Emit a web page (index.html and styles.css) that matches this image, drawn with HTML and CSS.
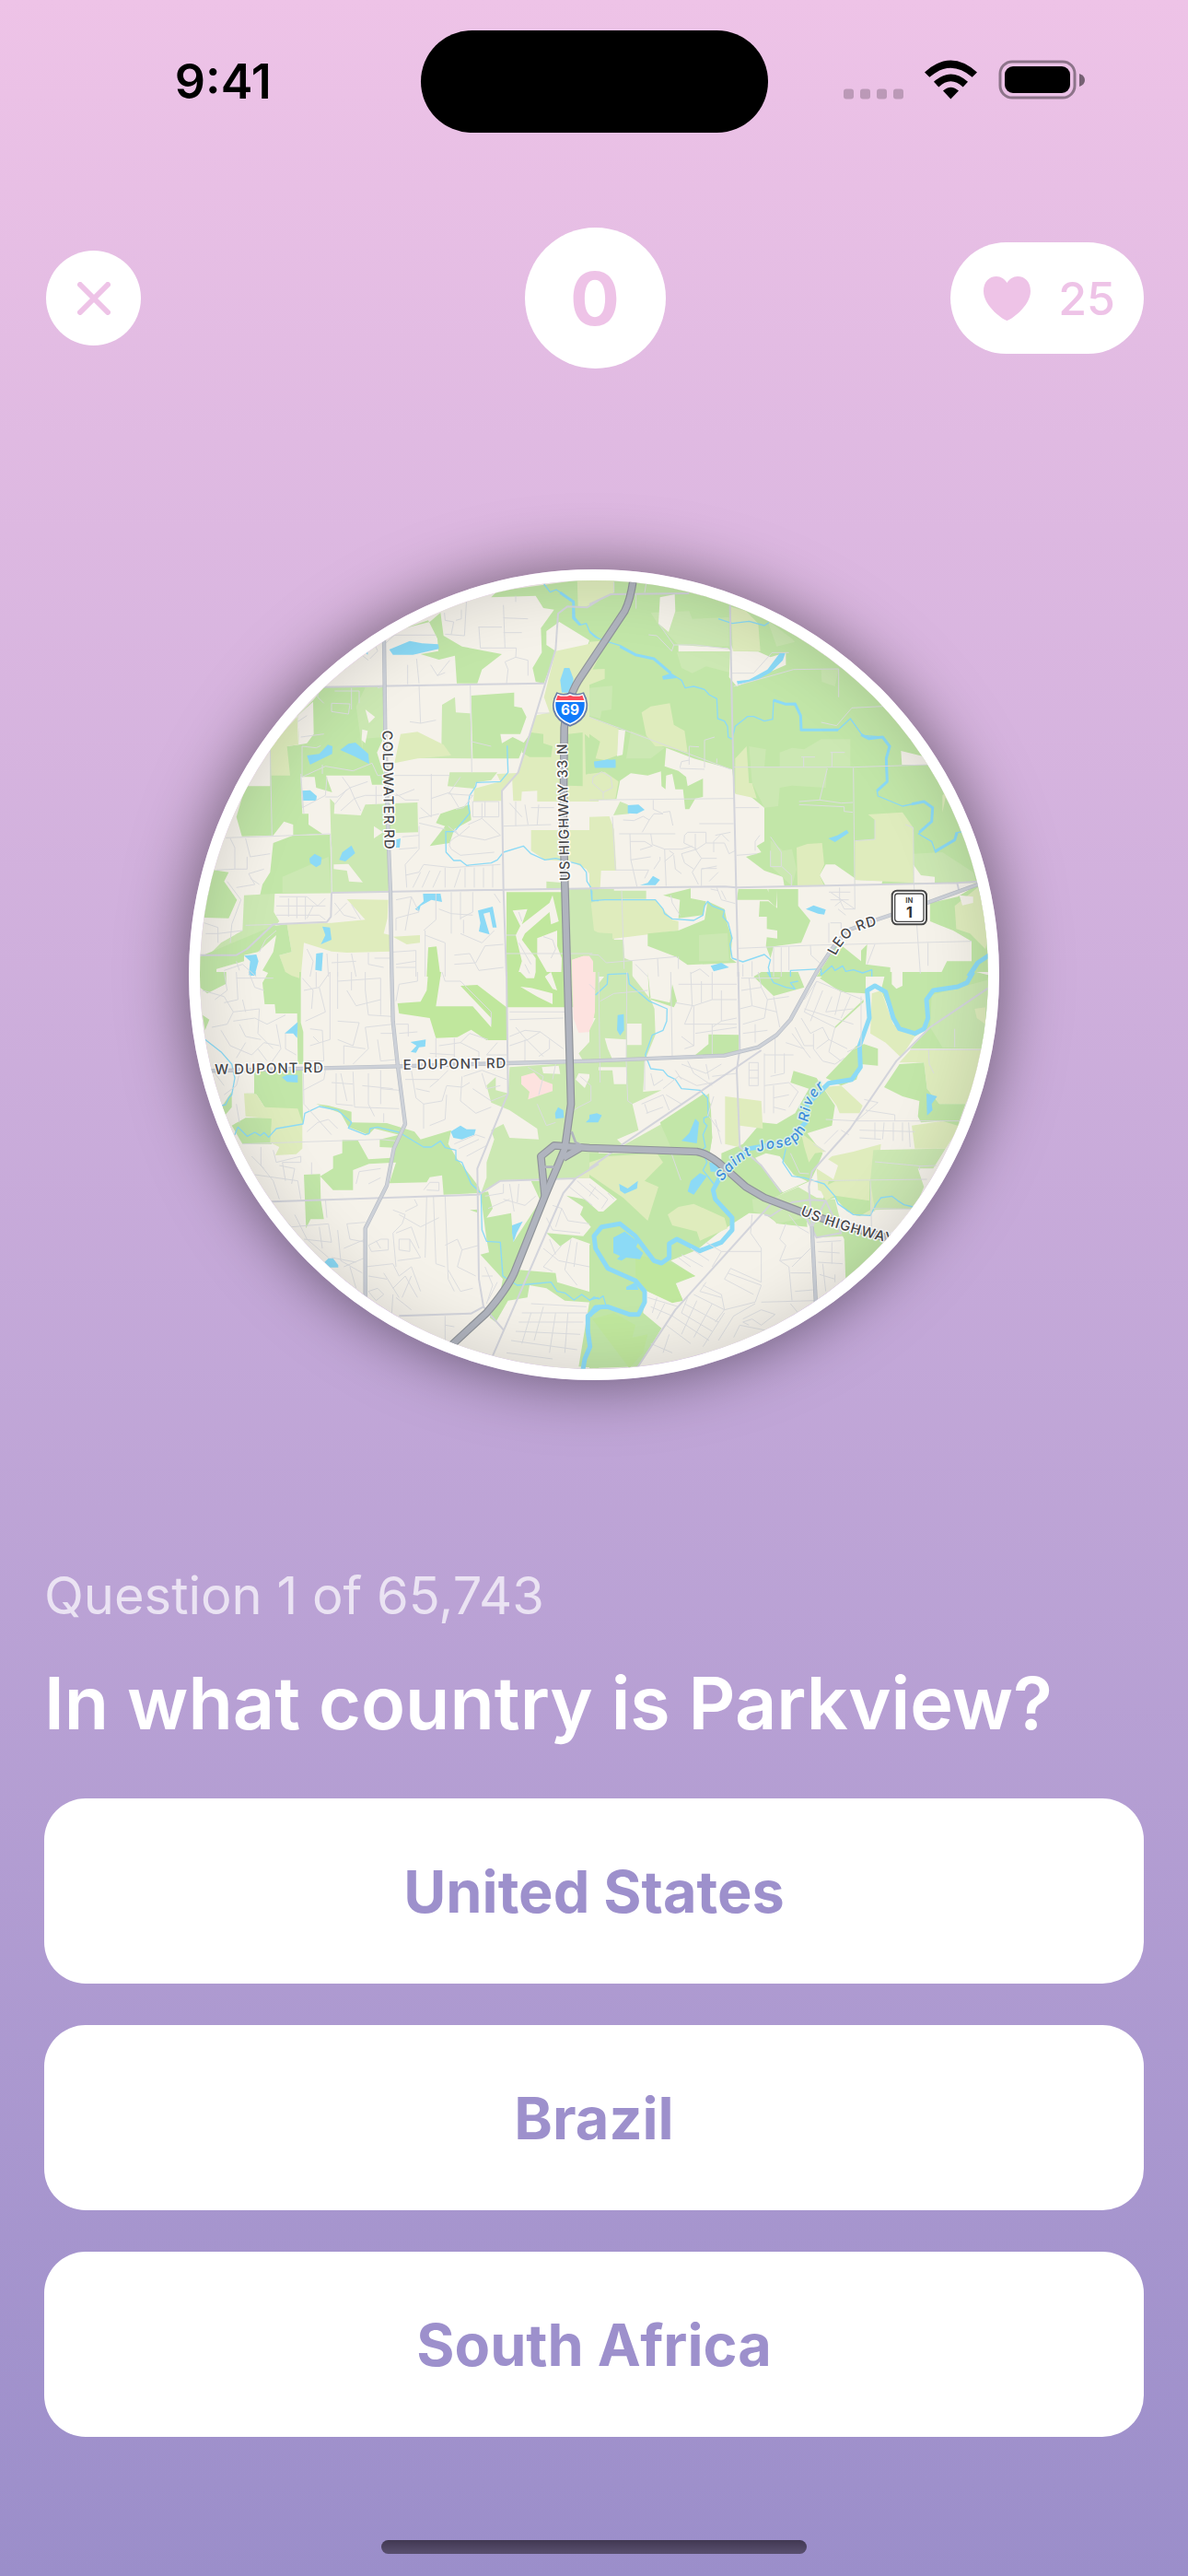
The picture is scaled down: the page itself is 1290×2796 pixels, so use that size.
FILE: index.html
```html
<!DOCTYPE html>
<html lang="en">
<head>
<meta charset="utf-8">
<meta name="viewport" content="width=device-width, initial-scale=1">
<title>Geography Quiz</title>
<link rel="stylesheet" href="styles.css">
</head>
<body>
<div class="screen">
  <header class="status">
    <time class="clock">9:41</time>
    <div class="island"></div>
    <div class="indicators">
      <svg class="dots" viewBox="0 0 65 42" aria-hidden="true">
        <rect x="0" y="31" width="11" height="11" rx="3"/><rect x="18" y="31" width="11" height="11" rx="3"/>
        <rect x="36" y="31" width="11" height="11" rx="3"/><rect x="54" y="31" width="11" height="11" rx="3"/>
      </svg>
      <svg class="wifi" viewBox="0 0 171 126" aria-hidden="true">
        <path d="M0 39Q85-39 171 39L155 55Q85-5 16 55Z"/>
        <path d="M30 70Q85 20 141 70L125 87Q85 50 46 87Z"/>
        <path d="M60 99Q85 76 111 99L85 126Z"/>
      </svg>
      <svg class="battery" viewBox="0 0 94 43" aria-hidden="true">
        <rect class="shell" x="2" y="2" width="81" height="39" rx="13"/>
        <rect x="7" y="7" width="71" height="29" rx="9"/>
        <path class="cap" d="M88 15Q94 17 94 22Q94 27 88 29Z"/>
      </svg>
    </div>
  </header>

  <nav class="topbar">
    <button class="close" type="button" aria-label="Close">
      <svg viewBox="0 0 36 36" aria-hidden="true"><path d="M3 3L33 33M33 3L3 33"/></svg>
    </button>
    <output class="score">0</output>
    <div class="lives">
      <svg viewBox="0 0 51 48" aria-hidden="true"><path d="M25.500 48C23 48 0 33 0 16C0 6 6 0 14 0C19 0 23 3 25.500 7C28 3 32 0 37 0C45 0 51 6 51 16C51 33 28 48 25.500 48Z"/></svg>
      <span>25</span>
    </div>
  </nav>

  <main class="stage">
    <div class="map">
      <svg viewBox="51 60 2568 2568" role="img" aria-label="Map of Parkview and surroundings">
        <defs>
          <path id="leo" d="M2122 1283C2150 1225 2180 1200 2262 1182"/>
          <path id="river" d="M1753 2018C1800 1950 1860 1912 1930 1908C2010 1900 2030 1850 2038 1790C2045 1745 2075 1710 2150 1670"/>
          <path id="us" d="M2006 2125Q2120 2175 2320 2222"/>
          <path id="us33" d="M1256 1038L1246 570"/>
        </defs>
        <rect class="land" width="2700" height="2700"/>

        <!-- vegetation, north-west -->
        <g>
          <path class="g" d="M1000 115L1020 95L1350 50V260L1310 285L1320 255L1222 195L1180 225V270L1210 290L1172 395L1145 390L1135 345L1165 295L1162 215L1205 155L1170 150L1145 110Z"/>
          <path class="y" d="M1280 50H1350V130L1310 145H1283Z"/>
          <path class="y" d="M1210 290L1350 260V780H1150V745L1100 748L1098 778H1072L1068 700L1090 685L1142 500L1190 490L1172 440Z"/>
          <path class="y" d="M1018 690L1085 687L1035 745V778L942 780L945 738L1030 715Z"/>
          <path class="g" d="M720 215L800 195L835 165L845 240L905 275L1035 300L970 350L955 395H888L882 305L830 318L770 300L828 290L825 250L795 190Z"/>
          <path class="g" d="M455 408L650 405L655 560L628 620L640 660L665 725H612L605 695H462L482 750L430 735L425 700H380L385 820H405V855L450 885L355 890V855L325 845L290 890L188 893L170 830L200 730H280V600L335 600L375 595L370 500L420 450Z"/>
          <path class="l" d="M590 408H650L652 570L585 575L580 610L560 470Z"/>
          <path class="y" d="M280 600L368 505L372 595L335 600L345 695H283Z"/>
          <path class="land" d="M370 500L420 455L422 560L400 590L375 595ZM590 480L622 505L602 525ZM580 545L598 550L590 590L578 580Z"/>
          <path class="l" d="M475 770L490 785L488 820L575 825L590 790L760 783L762 880L670 883L665 1075L482 1078L478 890Z"/>
          <path class="g" d="M290 915L355 890L475 888L480 1078L295 1080L270 1120L240 1115L255 1050L280 1010Z"/>
          <path class="l" d="M320 1025L470 960L480 1078H320Z"/>
          <path class="land" d="M487 985L535 983L582 1043L537 1040L530 1005L487 1000ZM618 860L648 880L618 900Z"/>
          <path class="l" d="M195 1085L295 1080L292 1140L310 1170L290 1190L200 1270L170 1280H80L120 1240L190 1200Z"/>
          <path class="y" d="M335 1180L480 1175L590 1165L530 1098L665 1100L662 1160L650 1210L672 1215V1268L530 1272L480 1268L390 1240L380 1350L330 1340L310 1280L350 1270Z"/>
          <path class="g" d="M95 1003L145 1010L130 1040L172 1100L145 1160L65 1158L60 1070Z"/>
          <path class="g" d="M50 1285L290 1185L335 1180L350 1270L310 1280L335 1350H300L255 1330L290 1270L300 1215L240 1270L195 1280V1300L105 1325V1350H50Z"/>
          <path class="g" d="M935 435L1075 425V470L1100 475L1115 505L1095 560L1030 560L1035 590L1070 570L1110 590L1090 640L940 640Z"/>
          <path class="l" d="M840 465L882 440L885 490L932 493L937 640L755 638L760 622L838 600Z"/>
          <path class="y" d="M685 655L705 560L760 553L845 595L870 630L760 640Z"/>
          <path class="l" d="M865 685L1020 685L1000 710L950 718L945 738L858 730Z"/>
          <path class="g" d="M930 790L935 840L880 870L865 915L800 925L850 860L820 850L835 820L880 805Z"/>
          <path class="g" d="M1105 590L1130 555L1170 560V590L1200 600L1195 635H1125L1100 620ZM1250 560L1298 555V730L1250 728ZM1305 560L1350 600V680L1308 692Z"/>
          <path class="y" d="M1130 873H1350V1060L1310 1000L1260 975L1175 970L1130 940Z"/>
          <path class="park" d="M1050 1075H1240V1350H1050Z"/>
          <path class="l" d="M1240 1065H1400V1350H1240ZM1180 1040L1240 1045V1065H1180Z"/>
          <path class="land" d="M1070 1135L1118 1130L1100 1180L1190 1110L1200 1085L1220 1170L1195 1180L1190 1140L1110 1210L1100 1230L1145 1290V1350H1085L1100 1300L1080 1215L1095 1185ZM1150 1225L1215 1200V1250L1230 1290L1228 1350H1190L1150 1280Z"/>
          <path class="park" d="M795 1255L822 1252L835 1350H790Z"/>
          <path class="y" d="M680 1220L768 1215V1240L725 1245Z"/>
          <path class="pink" d="M1265 1295L1300 1283H1330L1335 1350H1263Z"/>
        </g>
        <!-- vegetation, north-east -->
        <g transform="translate(1320 0)">
          <path class="g" d="M0 50H1350V1045L1200 1045L865 1050V1030L800 985H770L750 1020L770 1055H635L630 1025L570 1005L510 960L560 945L545 925L570 910V800L515 755L475 753L465 675L340 640L250 605L245 665L290 680L315 700L320 730L370 705V765L345 770L325 805H312L305 740L280 740L270 690L250 695L248 740L235 730L233 682L190 695L135 688L100 712L88 772L0 775Z"/>
          <path class="y" d="M0 60H80V100L0 138ZM0 260L60 255L0 370Z"/>
          <path class="l" d="M0 410L75 403L72 480L40 485L35 510L0 500ZM285 295L460 290L458 360L380 340L335 362L300 345ZM135 550L190 570L245 605L200 640H120ZM200 165L325 160L335 185L455 180V275L290 270L225 205ZM620 620L660 605L700 610L755 577H850V665L775 668L770 735L660 728L620 735L615 795L570 800L530 720L520 600L575 610L570 668H620ZM755 350L812 348L800 405L757 390ZM590 905L630 940L660 935L675 1000L660 1055L590 990ZM1055 950L1150 945L1250 1010L1260 1045L1055 1040ZM580 190L660 250L670 260L610 275Z"/>
          <path class="land" d="M230 115L278 105L280 160L258 228L225 200ZM290 270L450 280L462 290L290 292ZM460 265L470 290L550 292L590 310L640 295V335L480 405L455 375ZM1015 615L1085 632L1110 660H1018ZM92 545L117 548L108 628L90 632ZM1055 985L1080 1020L1125 1025V1045H1055ZM865 1035L955 1038L950 1055H865Z"/>
          <path class="y" d="M460 145L510 160L550 200L557 290H467ZM170 490L200 470L262 460L275 530L310 550L320 620L240 600L215 600L185 565ZM0 505L95 542L90 630L50 645L20 640L35 585L0 560ZM475 640L512 600L520 720L530 720L545 770L475 755ZM908 822L1020 815L1055 865V1045L865 1035V908L930 903V840ZM675 930L710 918L758 915L765 985L750 1020L765 1055H678ZM0 830L65 828L80 870L88 1005H38L35 1060H0ZM0 690L50 683L95 715L85 770L0 775ZM0 350L50 348V380L0 400ZM1150 760L1165 745L1150 815Z"/>
          <path class="l" d="M78 825L100 780L125 790L130 820ZM105 1070H185V1097H105ZM0 1070H105V1100L0 1110Z"/>
          <path class="y" d="M5 1110L30 1100H215L240 1130L270 1165L290 1170V1200L70 1228L15 1200Z"/>
          <path class="g" d="M190 1210L290 1200L375 1165L385 1105L440 1130L450 1180L465 1225L460 1290L480 1305L320 1312L280 1285L190 1250ZM240 1085L330 1063L330 1095L380 1105L370 1150L290 1160L295 1100ZM485 1065H580L590 1100H480ZM583 1065H612L608 1125L583 1100Z"/>
          <path class="g" d="M610 1065H680V1120L720 1168L690 1240L600 1252L590 1290L575 1250L578 1222L612 1226V1200L578 1195V1155H552L555 1105H583L612 1127Z"/>
          <path class="g" d="M740 1350L810 1240L885 1300V1265L905 1245L900 1310L980 1320V1350ZM1110 1110L1200 1090L1265 1050L1310 1200V1350H1140L1165 1300H1245V1235L1185 1200L1110 1170Z"/>
          <path class="y" d="M1190 1120L1265 1060L1305 1200L1290 1260L1240 1210L1195 1195Z"/>
          <path class="land" d="M1205 1085L1250 1090L1250 1110L1215 1118Z"/>
          <path class="l" d="M0 1205L75 1210V1230L110 1230L115 1290L140 1300V1350H0ZM357 1215L450 1208L455 1300H357Z"/>
          <path class="pink" d="M-57 1295L-20 1283H0L12 1300V1350H-57Z"/>
        </g>
        <!-- vegetation, south-west -->
        <g transform="translate(0 1335)">
          <path class="g" d="M255 35L275 0H380V165L388 195V300H370L368 135H298L295 105H262ZM228 325L385 315L387 495L262 440L235 398L195 395H228ZM155 500L200 475H285V560H190ZM50 0H137V38L75 70L52 50ZM60 140L82 155L68 190Z"/>
          <path class="y" d="M195 395L235 398L262 440L370 445L385 490V575L365 593L297 597L310 570L280 555L285 478L200 470ZM330 0H375V20L350 12Z"/>
          <path class="g" d="M155 390V440L130 470L125 435Z"/>
          <path class="g" d="M430 430L470 435L545 455V490L660 492L750 520L770 545L870 515L860 560L890 610L930 660L960 700L965 720L845 725L840 662L800 668L790 685L668 688L690 620L602 625L550 645V710H485L443 665L485 640V600L515 590V547H565L600 610L675 605L685 572L637 570V545L700 530L620 510L600 530L535 505L510 460ZM390 660L443 658L445 740L455 805H412L397 835Z"/>
          <path class="park" d="M695 102L770 97L790 60L795 0H837L820 112L940 112L1000 180V150L900 45L955 42L1050 115V222H985L935 188L890 212L820 215L800 150L700 135ZM1050 0H1240V115H1050Z"/>
          <path class="land" d="M1095 0H1145L1140 20H1115ZM1195 0L1215 60L1200 55L1175 15ZM1095 48L1130 52L1200 70V105L1150 80Z"/>
          <path class="l" d="M985 370L1015 342V385L1055 395L1060 310L1350 290V670L1030 678L965 725L985 670V620L1010 545L1000 515L1040 495L1060 540L1155 545L1150 510L1060 450L1000 425ZM1285 265L1350 195V290H1300ZM1235 0H1350V150H1240Z"/>
          <path class="land" d="M1285 330L1325 333L1305 378L1275 350ZM1165 310L1220 305L1225 332L1170 330ZM1240 115H1275L1285 200L1350 195L1280 270V288H1240Z"/>
          <path class="pink" d="M1263 0H1340L1338 130L1325 195L1285 198L1268 150ZM1098 340L1140 328L1160 350L1200 365V388L1120 415L1125 390L1098 365Z"/>
          <path class="g" d="M965 720L990 715L1005 770L985 800L1065 785L1072 880L1160 745L1130 680H1165V750L1090 970L1210 980L1215 1010L1350 1050V1078L1240 1070L1180 1030L1125 1020L1118 1060L1055 1070L1015 1140L995 1125L1030 1040L1038 1000L965 920L993 913L985 870ZM930 775L960 773V785ZM1245 728L1305 740L1350 780V1090L1322 1070V885L1265 865L1225 893L1180 850L1300 860L1325 830L1290 790L1300 765ZM1320 1075H1350V1290L1285 1285Z"/>
          <path class="y" d="M1275 672L1350 625V690L1330 670Z"/>
        </g>
        <!-- vegetation, south-east -->
        <g transform="translate(1320 1335)">
          <path class="l" d="M20 50L60 0H130L200 90L212 120L215 205L180 290L175 390L235 385L140 430L160 515L90 545L110 565L235 495L390 395L400 540L390 600L350 575L0 565V320H75L80 365H120V310H0V190L20 150Z"/>
          <path class="g" d="M230 490L375 395L395 430L400 540L390 600L350 575L265 570ZM190 0L200 90L275 115L285 95L270 40L262 100L195 85Z"/>
          <path class="land" d="M50 215L120 220V290L75 285L60 250ZM123 168H170V238H123Z"/>
          <path class="pink" d="M0 0H17V130L0 190Z"/>
          <path class="g" d="M0 590H350L520 700L630 720L560 760L600 790L520 785L420 850L350 905L265 940L345 990L280 1015L305 1070L270 1075L180 1035L175 1110L235 1160L160 1285L0 1290V890L20 870L0 780L45 780L90 740L0 670Z"/>
          <path class="g" d="M430 590L500 560L560 490L610 495L670 460L715 380L655 360L665 322L740 345L800 435L790 500L710 525L760 590L740 640L720 680L630 720L560 760L700 740L710 830L615 820L560 780L430 650Z"/>
          <path class="land" d="M540 605L575 590L620 600L665 660L710 682L630 718Z"/>
          <path class="y" d="M442 405L560 420L565 510L490 500L485 570L442 560ZM0 620L60 600L220 590L240 620L180 680L225 700L190 810L110 735L0 660ZM255 790L290 765L340 755L440 800L450 835L360 875L350 845L270 825ZM690 525L770 585L735 590L715 620L700 570Z"/>
          <path class="park" d="M150 920L260 945L345 990L280 1010L305 1070L270 1078L190 1040L150 990ZM10 1130L80 1110L150 1150L140 1190L190 1180L175 1240L130 1290Z"/>
          <path class="l" d="M530 740L600 735L680 700L740 735L800 740L830 860L740 865L700 800L610 820L590 795L535 780Z"/>
          <path class="g" d="M535 15L560 0H680L700 50L600 78ZM750 20L780 0H900V70L820 65ZM965 0H1320L1295 250H1045L1110 180L1060 210L1010 190L980 130L950 60ZM770 345L870 240L895 235L940 250V305L885 300L870 350L820 370ZM345 270L388 235V203L487 205V265L440 270ZM800 178L893 90V98L800 184Z"/>
          <path class="land" d="M985 0H1020V45L1000 55L985 40ZM1260 0H1300V10Z"/>
          <path class="l" d="M1115 75L1320 20V250L1150 245L1110 180Z"/>
          <path class="y" d="M915 200L920 70L950 60L990 170L1060 210L1015 278L965 230ZM1045 255L1290 250L1240 400L1225 430H1140L1100 380L1090 295H1010ZM1255 120L1290 115V170L1262 150ZM760 375L820 370L890 435L880 460H815L805 435ZM1050 500L1150 485L1215 490L1160 575H1060Z"/>
          <path class="g" d="M960 375L1010 300L1090 295L1100 380L1140 430H1225L1200 500L1150 485L1080 490L1070 470L1075 420L1020 405Z"/>
          <path class="y" d="M740 640L790 600L860 585L950 560L935 680L930 790L870 795L830 740L745 710Z"/>
          <path class="l" d="M925 580L1160 575L1120 640H1070L1090 700L1060 770L930 775L915 680Z"/>
          <path class="g" d="M780 680L915 680V775L880 795L840 780L800 735L760 745ZM810 830L920 865L985 875L835 1010L830 870Z"/>
          <path class="y" d="M750 705L800 682L912 680V745L800 728L770 745Z"/>
          <path class="land" d="M740 640L770 605L810 630L795 675ZM920 780L990 775H1070L980 880L920 860Z"/>
        </g>

        <!-- ponds, creeks and rivers -->
        <g>
          <path class="water" d="M668 285L735 257L775 265L828 268L830 283L745 302H680ZM1225 385L1238 345H1255L1268 380L1265 425H1230ZM400 630L440 625L468 595L483 600L482 625L410 660ZM508 612L535 592L558 588L600 625L603 658L555 633ZM383 745L410 743L432 762L430 777H385ZM685 905L705 900L702 930H690ZM408 965L425 950L448 962L445 985L430 994L410 980ZM505 970L515 945L545 923L557 948L525 975ZM752 1130L780 1105L778 1080H835L840 1107L805 1100L770 1120L765 1138ZM957 1135L1005 1122L1018 1190H1005L995 1140L975 1145L985 1180L995 1213L960 1203L965 1175ZM450 1187L475 1190L480 1230L445 1245L460 1215ZM430 1275L452 1272L448 1332L427 1328ZM195 1282L235 1278L242 1300L230 1345H210L215 1300ZM1335 650L1405 643V670H1338ZM590 295L598 290V302Z"/>
          <path class="creek" d="M1052 598L1055 685L1030 715L952 718L950 730L930 760L925 790L930 818L880 878H852L853 945L878 972H900L920 988L1000 980L1020 970L1040 945L1105 925L1130 950L1175 970L1210 965L1290 985L1310 1010L1312 1040L1325 1060L1328 1103H1350"/>
          <path class="creek" d="M1172 72L1192 98L1212 90L1270 130L1272 180L1290 205L1310 200L1320 225L1350 250"/>
          <path class="stream" d="M1225 100L1268 130V182L1290 205"/>
        </g>
        <g transform="translate(1320 0)">
          <path class="creek" d="M0 228L20 245L60 260L100 272L150 302L210 315L260 360L300 385L312 410L340 405L375 415L390 432L415 445L418 510L440 518L450 535L452 570L465 577L475 535L515 503H535L570 518L597 512L600 450L640 463L670 462L688 500L690 545L810 547L850 510L890 565L955 570L980 600L965 640L970 715L937 745L940 762L1020 795L1090 780L1120 800L1115 845L1072 885L1115 910L1128 945L1190 905L1195 882L1215 878"/>
          <path class="stream" d="M100 275L150 302L210 315L265 362M600 450L640 463L670 462L688 500L690 547L740 547L810 547M885 562L910 575L955 570L978 600L967 640L970 715L937 745M1050 788L1090 780L1118 800L1115 845L1075 880M1125 943L1190 905L1197 882"/>
          <path class="creek" d="M420 185L465 200L520 193L570 207L585 197M8 1070V1103L50 1100H215L240 1130L245 1145L270 1162L340 1167L370 1150L375 1120L385 1105L400 1120L440 1135L435 1155L452 1175L465 1225L458 1245L465 1290L500 1302L570 1278L590 1295L583 1320L590 1350M655 1350V1330L755 1325V1345L790 1315L800 1330L825 1315L835 1333L860 1328L890 1338L920 1328V1350"/>
          <path class="water" d="M480 388L520 383L580 350L620 297H638L630 320L590 360L545 385L483 398ZM15 650L60 643L85 647V670L18 670ZM125 792L160 790L180 807L155 820L125 818ZM778 900L808 890L838 872L845 882L800 912ZM165 1052L190 1045L207 1022L230 1035L215 1052ZM705 1130L730 1118L770 1132L765 1148L745 1145ZM237 372L265 362L285 378L240 383ZM395 1315L430 1305L455 1320L405 1333Z"/>
          <path class="river" d="M1310 1275L1265 1305L1235 1350"/>
        </g>
        <g transform="translate(0 1335)">
          <path class="water" d="M327 200L370 163L368 215L355 200ZM318 343L335 335H370V360L335 358ZM213 0H233V12H215ZM737 228L787 220L785 243L765 245L755 263L738 260L757 240ZM868 520L900 500L920 512L950 512L945 530L905 545L877 540ZM1208 460L1218 440L1235 450L1237 475L1210 478ZM1308 490L1335 462L1360 465L1348 490ZM1068 825L1103 812L1083 850L1073 880L1068 850ZM457 945L470 932H485L502 955V962H475Z"/>
          <path class="creek" d="M68 220L120 260L155 300L165 345L155 400L145 410L135 432L122 435M165 530L175 505L205 535L230 522L248 533L260 523L275 538L300 510L387 495L393 460L440 438L500 450L545 490L535 508L590 530L603 525L605 510L630 505L700 522L780 570H805L835 550L850 572L885 580V612L905 620L935 690L967 720L970 840L985 877L1030 880L1038 990L1085 1020L1195 1010L1215 1040L1240 1045L1270 1068L1295 1050L1320 1068L1350 1060"/>
          <path class="river" d="M1355 1090L1315 1120V1170L1322 1220L1305 1260L1298 1300"/>
        </g>
        <g transform="translate(1320 1335)">
          <path class="river" d="M1250 0L1230 35L1200 48L1120 60L1098 90L1103 150L1090 185L1060 200L1010 185L990 150L965 65L930 45L905 60L912 150L880 240L883 310L855 350L780 362L710 430L705 490L640 555L520 575L430 660L403 710L410 740L465 800V840L430 880L360 908L285 870L260 885V930L235 948L210 940L150 860L100 820L40 830L15 860L20 900L60 965L150 1005L180 1040V1075L160 1115H130L60 1090L20 1092L0 1120"/>
          <path class="water" d="M78 865L115 845L160 880L152 895L175 915L165 935L120 930L105 940L90 935L100 925L78 915ZM92 140L112 137L113 190L100 207L90 190ZM0 465L25 460L40 468L28 488L0 485ZM300 550L325 525L345 478L357 490L350 558ZM320 715L330 680L360 655L383 665L340 725ZM97 690L125 705L158 680L155 705L115 722L100 712ZM390 620L430 625L435 650L395 650ZM1098 395L1133 405L1115 430L1118 450L1100 467ZM120 1025L150 1010L160 1035H120Z"/>
          <path class="creek" d="M20 75L58 40L60 8L125 5L130 40L195 95L253 120L252 160L240 190L205 205L182 270L200 315L240 320L255 338L280 350L300 380L360 385L385 410L387 470L373 475V490L383 500L370 530L378 570L367 580L383 620L370 645L405 690M640 575L630 620L660 665L700 670L765 690L800 730L810 755L860 790L915 793L935 755L950 735L985 730L1005 745L1025 758L1055 765M580 0L600 35L640 50L670 55L655 35L680 30M0 1070L15 1058L30 1065L45 1055L55 1090"/>
        </g>

        <!-- residential streets -->
        <g class="street">
          <path d="M848 165L850 190L878 195L870 235M903 155V185L885 190M920 120L913 240L850 235M958 212H1035M960 212L965 280H1082M1040 140L1045 280M1040 182L1120 185M1040 230H1100M1080 110V130M1082 280L1080 310L1120 320V370M1080 310L1045 325L1055 350L1050 395M728 335V398M757 315L765 395M803 335L825 370L865 320M825 370L850 360M620 265L630 290L605 315M575 300L600 320M685 238H820M650 270L685 238M490 420H570V460M480 460L540 462L535 495L480 487V460M435 415V440L455 460M545 410V480M370 520L400 500M380 570L455 560M384 600V700L460 665L550 680L612 655L630 695H865M384 600L430 605L445 598M450 660V690M765 400L770 525L735 520M770 525L820 515M932 400L937 685M1148 492H1190M937 585L1000 600M280 600L286 893L475 885L480 930V1077M135 898L286 893M380 700L385 800L460 760L465 700"/>
          <path d="M460 765H500L540 735L515 700M540 735L555 770L510 810M555 770L590 760H700L750 740M540 735L598 715M555 770L575 810M625 790V730M690 755L720 775L765 775M805 690V830L770 800M805 770L865 750L900 700M865 750L895 800M830 820L765 835M860 755L940 760L910 800L885 805M710 895L765 890M700 935L760 930M765 860V935L720 985L725 1060M765 850L850 870M860 860L895 890L930 860M870 935Q850 910 895 890L980 905L1030 890M895 890L880 870M925 855L970 835L1030 890M870 935L900 955L1010 945M940 780H1025V830H940ZM970 785V835M980 780V830M720 1020L765 1010L780 985L870 995L1030 985M745 1060L770 1010M775 1060L800 1005M810 1060L835 1005M850 1060V995M880 1060L900 1000M915 1060V995M945 1060V995M975 1060V995M1005 1060V985"/>
          <path d="M1080 780V860M1040 860L1195 855M1110 790L1120 855M1155 790L1150 855M1060 785L1100 830M1130 800H1205M820 1080V1165L780 1200M870 1075V1210M900 1075V1165M940 1075V1140L900 1160M785 1200V1350M785 1215L850 1240V1350M830 1130L870 1145L940 1150M1010 1080L1030 1110M690 1100L740 1090L765 1140L690 1160V1200M740 1090L720 1200M680 1270L755 1265V1350M690 1310L755 1300M690 1320H755M880 1280L930 1275L960 1330L1040 1320M880 1310L950 1305L980 1250L1040 1245M910 1165V1210M1010 1200L970 1240L900 1210M1050 1215H1080"/>
          <path d="M300 1120H460M310 1090H400L435 1120L460 1095M340 1095V1155M367 1090V1160M395 1090V1165M420 1120L400 1160M300 1150H440L460 1165M150 900L165 930V1000L105 1003M200 900L215 960L280 950M205 960V1000L165 1000M140 1040L185 1100L155 1180L150 1240M215 1030L245 1050M170 1060L230 1050L210 1015L260 1000M65 1175L110 1190V1240M70 1210H110L190 1200M545 1115L575 1165M490 1110L520 1150L560 1160M490 1150L530 1110M400 1260L420 1300L410 1350M465 1275L470 1350M500 1275V1350M545 1275L560 1350M600 1272V1310L650 1320M480 1305L560 1300M620 1290H670M130 1330L190 1310L235 1350M245 1270L265 1230L300 1200M170 1300L180 1330M490 790L530 740M200 1183L300 1180M380 690L390 820"/>
          <path d="M1170 1220L1200 1230L1210 1260L1195 1290M1110 1310L1125 1340M1090 1240L1130 1310M1100 1170L1090 1140M630 410L650 405"/>
          <path d="M1050 1275H1330"/>
        </g>
        <g class="street" transform="translate(1320 0)">
          <path d="M80 65V100M185 70L180 100M152 105V152M193 237L220 240L268 290L275 270H345L455 283M225 200L275 270M465 362H535L595 295H650M470 405L665 350L812 348V440M755 522L805 533L855 475L955 470M0 505L460 675M470 668H860L1105 660M375 670V580L408 570M325 660V600L357 602M295 670L300 650L325 645M295 672L375 675M415 640V655M0 775L470 770M475 800L553 800M860 670L865 1130L785 1075M775 672L750 775L820 785L858 783M683 780L750 775M683 790L830 797V812L858 815M690 635H735M698 635V668M785 620H832M790 620V668M930 840V903L865 908M1030 855L1055 865L1057 1045L1070 1230L1078 1340M590 895L625 945V990L658 1020V1055M590 940V992H625M10 720L45 750L75 735L70 700L40 683L12 700ZM45 750V770M110 840L145 842L175 828L195 840L172 880M208 775V805L240 820H210L195 840M240 815L262 812L272 858M358 852H470M97 885H280M132 885L135 970L155 1057M132 910H180L205 925L165 937M200 885L205 920L245 935L250 1055M135 970L200 960M210 1000L230 970V960M75 830L85 1003H193L180 1030M245 935H300L335 925M260 940L275 950L245 975M320 880H380V915L350 935L308 915L310 890ZM345 885V935L365 965H415M350 935L300 950L310 980L340 1000M365 965L335 1010L355 1050M365 1055V1000L415 990M380 915H440L455 950L475 940M405 945V910L430 885L455 910M410 890L460 880M365 998H415M390 1040L420 1010M275 955L280 1000L300 1015M540 940V910L555 890M480 955L545 950"/>
          <path d="M780 1075H850M785 1100H845M815 1060V1100L830 1130H865M825 1100L800 1120M810 1130L835 1150M785 1175H820V1210M780 1175V1240M485 1258L720 1248L1245 1235M1103 1240V1315M720 1248L722 1280L755 1310M600 1255V1350M650 1252V1330M930 1245L905 1310M0 1278L30 1280L55 1305L285 1285M105 1070L113 1325M265 1085L270 1110L295 1150M415 1060L430 1100L475 1112M395 1065L420 1070M430 1070L445 1100M222 1290L225 1350M330 1340L360 1325L390 1350M290 1285V1325M150 1310L190 1350M500 1310V1350M530 1300V1350M625 1255V1350"/>
        </g>
        <g class="street" transform="translate(0 1335)">
          <path d="M130 0L140 60L100 90M170 20H290M170 0L175 90L130 100M210 0L230 50L260 60M60 60L130 80L160 130L245 120M160 130L140 170L90 180M190 90L200 130M245 120L240 200L290 250M160 160L230 150L270 170L330 140M180 170L200 210L250 220M120 190L150 240L220 270L260 230L310 240M200 230L170 280M300 170L315 250L280 300M330 200V250L365 270M240 250L270 290M385 20L420 60L415 120M390 60L440 50L475 0M440 50L460 130L395 160M430 0V50M475 0V220L410 240M410 185L450 190L455 290L400 290M420 210L440 230M500 0V120M500 30L640 20M530 60L560 110L640 90M545 0V60M590 0V60M590 60L600 140L680 145M640 20V140M550 300L600 250L590 180L680 170M500 160L570 165L550 240L500 220M520 240V300M520 240L590 250M640 200H680M630 220L640 290L690 285M690 95L700 40L760 30V0M840 0L850 30H900L1000 130V170M700 200L760 195M690 170H730V210M820 215V290M830 240L900 230L960 260M880 215V290M900 230L930 200L990 220M960 260V290M800 265L880 270M1020 230L985 270H1050M1060 130H1240M1060 155L1235 150M1060 210L1110 190L1160 195L1235 250M1060 240L1120 220L1160 195M1080 180L1110 215L1170 275M1110 220V290M1190 220V250L1155 275"/>
          <path d="M388 320L390 430L480 530M460 320L455 350L388 385M495 330V430L550 435M510 330L530 420M550 325L555 440L700 445M480 360L550 365M600 330V430L620 470M580 370L680 380M640 320V430M640 380L700 385M650 460V490M720 350H830L860 320M740 320L755 410L780 430L840 420M800 375L830 350M780 430V510M840 420L855 370L905 375L930 360M755 380L800 390M855 400L850 480L800 500M905 340L900 420L950 460L1000 440M910 340L970 320L1050 350M940 380L1000 420L1050 400M970 330L985 380L1030 370M400 520L435 490L470 480L500 510M190 560L640 545L690 550M180 330L170 370L130 400M100 330L130 370M170 430L180 490M880 560L950 530L980 540M895 575L960 545M920 600L985 565M250 570V630L290 680M290 580L300 620L380 600M310 630L360 640L350 690M220 600L260 640M230 660L370 680L380 740M290 680L310 740M380 600V620H320L330 680M415 620V660M460 740L465 800M300 780L350 830L470 820L480 880L390 870M360 790L400 870L470 930M440 830L450 900M500 840L510 940L580 980M530 820L590 815M530 820L540 870L590 880M520 900L590 870M480 930L560 945M520 960L590 930M540 960L560 1030M600 890L640 870H665V905L610 910ZM625 875L640 900M680 775L720 790L710 820L680 850L690 960M720 780L760 760L750 740M700 790L770 830L830 800M790 730L785 930M812 730L820 950L850 960M850 730L860 1000L880 1040M700 870H735V910L700 905ZM735 870L770 930L695 940M690 850L740 830L765 900M850 890L890 870L905 905L960 890M905 905L890 960L950 990M860 970L900 1040L940 1030M590 960L680 950L700 990L740 960L770 1040M600 990L660 1000M600 1040L630 1030L650 1050L625 1070ZM680 1030L720 990L760 1060M690 1060L740 1100M650 980L700 1060M740 990L710 1060M680 1050L676 1115M850 1120V1210M850 1150L880 1155"/>
          <path d="M980 960L1005 1020L985 1080M1005 990H970M1020 1010L990 1070M560 690L570 650L640 640M600 690L640 670M780 710L800 685H830V712L790 710M980 730L1040 720V690M1040 740L1110 760L1145 730M1060 690L1075 780M1090 690L1085 750M990 770L1060 740M1180 800L1200 840L1290 850M1230 770L1250 810L1320 820M1230 770L1210 830M1230 770L1200 760M1255 700L1330 760M1280 680L1350 740M1230 890L1170 960L1200 975M1260 870L1240 970L1280 1020M1280 880L1270 960M1170 900L1220 940L1320 960M1190 870L1210 920M1100 1110H1315M1090 1140H1300M1080 1170L1290 1180M1065 1200L1280 1230M1050 1240L1200 1260M1130 1080L1310 1090M1130 1110L1100 1210M1170 1090L1140 1200M1210 1110L1190 1240M1250 1110L1240 1240M1155 400L1170 340L1120 310M1200 350L1210 300M1150 430L1180 500L1210 490M1255 460L1285 440L1325 420V370L1290 340"/>
        </g>
        <g class="street" transform="translate(1320 1335)">
          <path d="M30 0L35 360M35 95L80 70L190 60M122 0L120 290L125 420L140 430M0 40L20 60M265 0L270 280M290 40H480M280 100L340 110L400 90H480M330 0L335 110L310 170M365 30V100M400 0V90M430 60V160L400 180M310 170H480M340 110V240L310 250M345 200L480 180M400 170V270M430 160L480 150M300 210L340 240M180 290V385M200 330L210 370L240 350M240 380L290 340L350 370L400 360M280 320L300 350M320 290L340 330L400 370M380 300L390 350M400 340L480 330M300 300L380 330L430 300M170 430L240 400L260 450M185 460L240 440M180 430L190 460M250 400L300 430M495 20H620M495 60L560 50L580 90L650 80M520 20L530 110L490 120M560 50L550 0M580 90L570 150L500 170M530 110L610 130M600 80L620 180M500 200L580 190M540 170V230M570 265V460M570 270H665M605 210V330M635 265V330L590 340M520 295H550V370H520ZM520 320H550M520 345H550M570 370L650 360L680 390L650 440M600 370V460M600 410L650 400M600 440L640 450"/>
          <path d="M700 90L740 30L890 90M740 30L700 130L800 180M760 60L720 160M790 80L770 130L860 120M820 60L800 140M850 80L820 150M885 80V240L840 260M700 120L860 170M690 150L720 200L760 180L780 220L740 250M730 200V250L760 290M670 180L700 240L730 240M660 200L720 280M640 230L700 250M780 220L840 250M800 180L780 260L820 290M760 290L800 300L830 280M1190 185V245M1045 253H1285M1105 255L1107 300L1122 330M870 485H1210M820 515L845 530M765 560L810 515M730 560L770 585M895 415L940 425L870 485M900 450L995 465V485M930 490V545M960 490L955 545M990 490V550M1040 490L1045 570M1020 490V550M880 515L1060 520M880 540L950 545M770 480L870 485M720 680L1100 675M930 618L1080 632L1130 630M1075 630V645M915 680L920 860M920 770L1060 772M655 590L685 655L715 657M385 470L405 405M390 470L425 520M410 480L430 560M260 570L298 678M0 690L60 740L40 770M20 700L0 730M60 720L80 740"/>
          <path d="M530 790L525 850L560 900V1010M380 880L430 910L400 960M430 910L560 910M460 965L560 1010M440 1000L535 1050M460 965L440 1000M370 1020L430 1050L440 1100L410 1140M380 1010L360 1040L430 1060M340 1050L440 1100L540 1075L560 1020L450 980M310 1080L420 1140M320 1060L300 1110L400 1170M270 1120L390 1200M250 1150L330 1210M260 1180L240 1240M200 1210L270 1240M350 1070L300 1180M400 1080L340 1190M440 1110L370 1220M540 1080L470 1120L420 1200M500 1130L560 1100L605 1115L560 1150L530 1130L500 1140L520 1150M470 1190L490 1150L590 1170M560 1075L735 1070M655 1080L680 1110M620 940L650 960L660 1070M620 940L640 890L620 870L640 820M620 940L690 930L720 900M655 980H720M660 960L700 920M670 1040L730 1035M650 790L680 830L715 850M740 880L820 875M745 910L815 915M745 945L825 950M750 985L800 1000M790 880V950M760 950L770 1040M800 985V1010M290 930L330 960M300 920L370 960M330 900L390 940M200 1090L270 1120M220 1060L205 1110M245 1080L220 1130M190 1060L290 1090"/>
        </g>

        <!-- connecting roads -->
        <g class="road">
          <path d="M455 407L1172 395M1350 125L1312 148L1248 145L1218 168L1210 285L1088 685L1035 745L1040 1065L1050 1350M480 1077L1040 1067L1350 1063M480 1077L478 1155L465 1172L290 1180L205 1260L170 1280H50"/>
          <path transform="translate(1320 0)" d="M0 138L70 105L325 102M458 140L465 500L470 700L478 1060L485 1350M0 1062L440 1057L480 1060L1200 1045L1270 1040M1198 1045L1204 1070"/>
          <path transform="translate(0 1335)" d="M1050 0L1055 395L955 640L960 1000L975 1090L1040 1165M285 748L960 725L1030 680L1275 672L1350 625M1275 672L1235 720L1005 1250M700 1120L935 1112L975 1090"/>
          <path transform="translate(1320 1335)" d="M485 0L490 250L480 320L490 570L560 630L625 718M560 255L110 560L0 640M1310 45L1110 180L1000 290L850 510L725 650L715 700L725 830M610 735L280 1100L155 1290M570 790L590 795L660 750L720 742L770 745L820 850L740 865L700 790M770 745L725 830"/>
        </g>
        <g class="artery-edge">
          <path id="a1" d="M651 250L655 560L665 900L672 1075L676 1335L680 1495L695 1635L720 1830L683 1910L660 2030L590 2170V2400"/>
          <path id="a2" d="M85 1657L700 1642L1050 1632L1320 1625L1760 1607L1870 1580L1930 1540L1975 1490L2060 1335L2110 1260L2160 1200L2240 1170L2420 1110L2600 1045"/>
          <path id="a3" d="M2045 2165L2058 2420"/>
        </g>
        <g class="artery"><use href="#a1"/><use href="#a2"/><use href="#a3"/></g>
        <g class="highway-edge">
          <path id="h1" d="M1464 50Q1455 120 1435 160L1285 385Q1250 440 1238 540L1235 850L1240 1050L1248 1335L1260 1765L1240 1910L1175 2065L1075 2315Q1050 2370 985 2445L860 2560"/>
          <path id="h2" d="M1175 2065L1162 1935L1205 1900L1320 1908L1670 1920Q1700 1925 1740 1955L1830 2035L1890 2070L2020 2120L2320 2210"/>
          <path id="h3" d="M1235 1940L1290 1908"/>
        </g>
        <g class="highway"><use href="#h1"/><use href="#h2"/><use href="#h3"/></g>
        <path class="ramp" d="M1262 1855L1275 1890L1310 1908M1172 1970H1205"/>

        <!-- route shields -->
        <g>
          <path d="M1213 424Q1235 434 1257 424Q1280 434 1302 424Q1320 455 1312 485Q1302 520 1257 536Q1212 520 1202 485Q1195 455 1213 424Z" fill="#6b7fa6"/>
          <path d="M1216 429Q1237 438 1257 429Q1278 438 1299 429Q1314 458 1307 482Q1298 514 1257 530Q1216 514 1207 482Q1200 458 1216 429Z" fill="#fff"/>
          <path d="M1217 434Q1237 441 1257 434Q1278 441 1297 434L1303 450H1211Z" fill="#fb4b5b"/>
          <path d="M1210 456H1304Q1308 505 1257 525Q1206 505 1210 456Z" fill="#127bfb"/>
          <text class="shield-num" x="1257" y="499">69</text>
          <rect x="2306" y="1070" width="112" height="110" rx="16" fill="#fff" stroke="#484848" stroke-width="6"/>
          <rect x="2315" y="1080" width="94" height="91" rx="9" fill="#fff" stroke="#484848" stroke-width="4"/>
          <text class="state" x="2362" y="1110">IN</text>
          <text class="state-num" x="2362" y="1157">1</text>
        </g>

        <!-- labels -->
        <g class="label">
          <text transform="translate(646 548) rotate(89)">COLDWATER RD</text>
          <text><textPath href="#us33">US HIGHWAY 33 N</textPath></text>
          <text><textPath href="#leo">LEO RD</textPath></text>
          <text transform="translate(100 1668) rotate(-1)">W DUPONT RD</text>
          <text transform="translate(713 1653) rotate(-1)">E DUPONT RD</text>
          <text><textPath href="#us">US HIGHWAY</textPath></text>
          <text class="river-name"><textPath href="#river">Saint Joseph River</textPath></text>
        </g>
      </svg>
    </div>
  </main>

  <section class="quiz">
    <p class="progress">Question 1 of 65,743</p>
    <h1 class="question">In what country is Parkview?</h1>
    <div class="answers">
      <button class="answer" type="button">United States</button>
      <button class="answer" type="button">Brazil</button>
      <button class="answer" type="button">South Africa</button>
    </div>
  </section>

  <footer class="home"><div class="home-bar"></div></footer>
</div>
</body>
</html>
```

FILE: styles.css
```css
* { box-sizing: border-box; }

body {
  margin: 0;
  font-family: Inter, "Liberation Sans", sans-serif;
}

.screen {
  display: flex;
  flex-direction: column;
  min-height: 100vh;
  background: linear-gradient(#eec3e7, #9b8eca);
}

/* status bar */
.status {
  display: grid;
  grid-template-columns: 1fr 377px 1fr;
  align-items: center;
  padding-top: 33px;
}
.clock {
  padding-left: 28px;
  text-align: center;
  font-size: 52px;
  line-height: 60px;
  font-weight: 600;
}
.island {
  height: 111px;
  border-radius: 56px;
  background: #000;
}
.indicators {
  display: flex;
  justify-content: flex-end;
  gap: 23px;
  padding-right: 112px;
  padding-bottom: 4px;
}
.indicators svg { display: block; height: 43px; }
.indicators .dots { width: 65px; opacity: 0.2; }
.indicators .wifi { width: 57px; }
.indicators .battery { width: 94px; }
.shell { fill: none; stroke: #000; stroke-width: 3px; opacity: 0.4; }
.cap { opacity: 0.5; }

/* close, score, lives */
.topbar {
  display: grid;
  grid-template-columns: 1fr auto 1fr;
  align-items: center;
  margin-top: 103px;
  padding: 0 48px 0 50px;
  color: #eec3e7;
}
.close {
  display: grid;
  place-items: center;
  width: 103px;
  height: 103px;
  padding: 0;
  border: 0;
  border-radius: 50%;
  background: #fff;
  color: inherit;
}
.close svg {
  width: 36px;
  height: 36px;
  fill: none;
  stroke: currentColor;
  stroke-width: 6px;
  stroke-linecap: round;
}
.score {
  display: grid;
  place-items: center;
  width: 153px;
  height: 153px;
  border-radius: 50%;
  background: #fff;
  font-size: 80px;
  line-height: 100px;
  font-weight: 700;
}
.lives {
  display: flex;
  justify-self: end;
  align-items: center;
  gap: 30px;
  height: 121px;
  padding: 0 31px 0 36px;
  border-radius: 61px;
  background: #fff;
  font-size: 50px;
  line-height: 60px;
  font-weight: 500;
}
.lives svg { width: 51px; height: 48px; fill: currentColor; }

/* map */
.stage {
  flex: 1;
  display: grid;
  place-items: center;
  padding: 19px 48px 0;
}
.map {
  position: relative;
  width: 100%;
  max-width: 880px;
  aspect-ratio: 1;
  border: 12px solid #fff;
  border-radius: 50%;
  overflow: hidden;
  box-shadow: 0 0 70px rgba(0, 0, 0, 0.5);
}
.map::after {
  content: "";
  position: absolute;
  inset: 0;
  border-radius: 50%;
  box-shadow: inset 0 0 70px rgba(0, 0, 0, 0.14);
}
.map svg { display: block; width: 100%; height: 100%; }

.land { fill: #f5f2ea; }
.g { fill: #c2e6a8; }
.l { fill: #cce8b3; }
.y { fill: #dfecbd; }
.park { fill: #c0e79d; }
.pink { fill: #fde2df; }
.water { fill: #8cdaf6; }
.creek, .stream, .river {
  fill: none;
  stroke: #8cdaf6;
  stroke-width: 4;
  stroke-linejoin: round;
}
.stream { stroke-width: 9; }
.river { stroke-width: 15; }
.street { fill: none; stroke: #dcdddf; stroke-width: 3; }
.road { fill: none; stroke: #d3d4db; stroke-width: 6; stroke-linejoin: round; }
.artery-edge { fill: none; stroke: #b9bec6; stroke-width: 13; stroke-linejoin: round; }
.artery { fill: none; stroke: #cdd1d8; stroke-width: 9; stroke-linejoin: round; }
.highway-edge { fill: none; stroke: #8f9399; stroke-width: 26; stroke-linejoin: round; }
.highway { fill: none; stroke: #b0b4be; stroke-width: 19; stroke-linejoin: round; }
.ramp { fill: none; stroke: #b0b4be; stroke-width: 8; }

.label {
  fill: #48484a;
  stroke: #fff;
  stroke-width: 9;
  stroke-linejoin: round;
  paint-order: stroke;
  font-size: 45px;
  font-weight: 500;
  letter-spacing: 3px;
}
.river-name { fill: #3f8ddb; stroke: #d8f0e4; font-style: italic; letter-spacing: 5px; }
.shield-num, .state, .state-num { text-anchor: middle; font-weight: 700; }
.shield-num { fill: #fff; font-size: 46px; }
.state { fill: #484848; font-size: 23px; }
.state-num { fill: #303030; font-size: 48px; }

/* question and answers */
.quiz { padding: 0 48px; }
.progress {
  margin: 0;
  font-size: 56px;
  line-height: 72px;
  color: rgba(255, 255, 255, 0.7);
}
.question {
  margin: 30px 0 54px;
  font-size: 79px;
  line-height: 100px;
  font-weight: 600;
  color: #fff;
}
.answers { display: grid; gap: 45px; }
.answer {
  min-height: 201px;
  padding: 24px;
  border: 0;
  border-radius: 45px;
  background: #fff;
  color: #9d90cc;
  font-family: inherit;
  font-size: 63px;
  line-height: 80px;
  font-weight: 700;
}

.home { padding: 112px 0 24px; }
.home-bar {
  width: 462px;
  height: 15px;
  margin: 0 auto;
  border-radius: 8px;
  background: linear-gradient(#413852, #5a5070);
}
```
